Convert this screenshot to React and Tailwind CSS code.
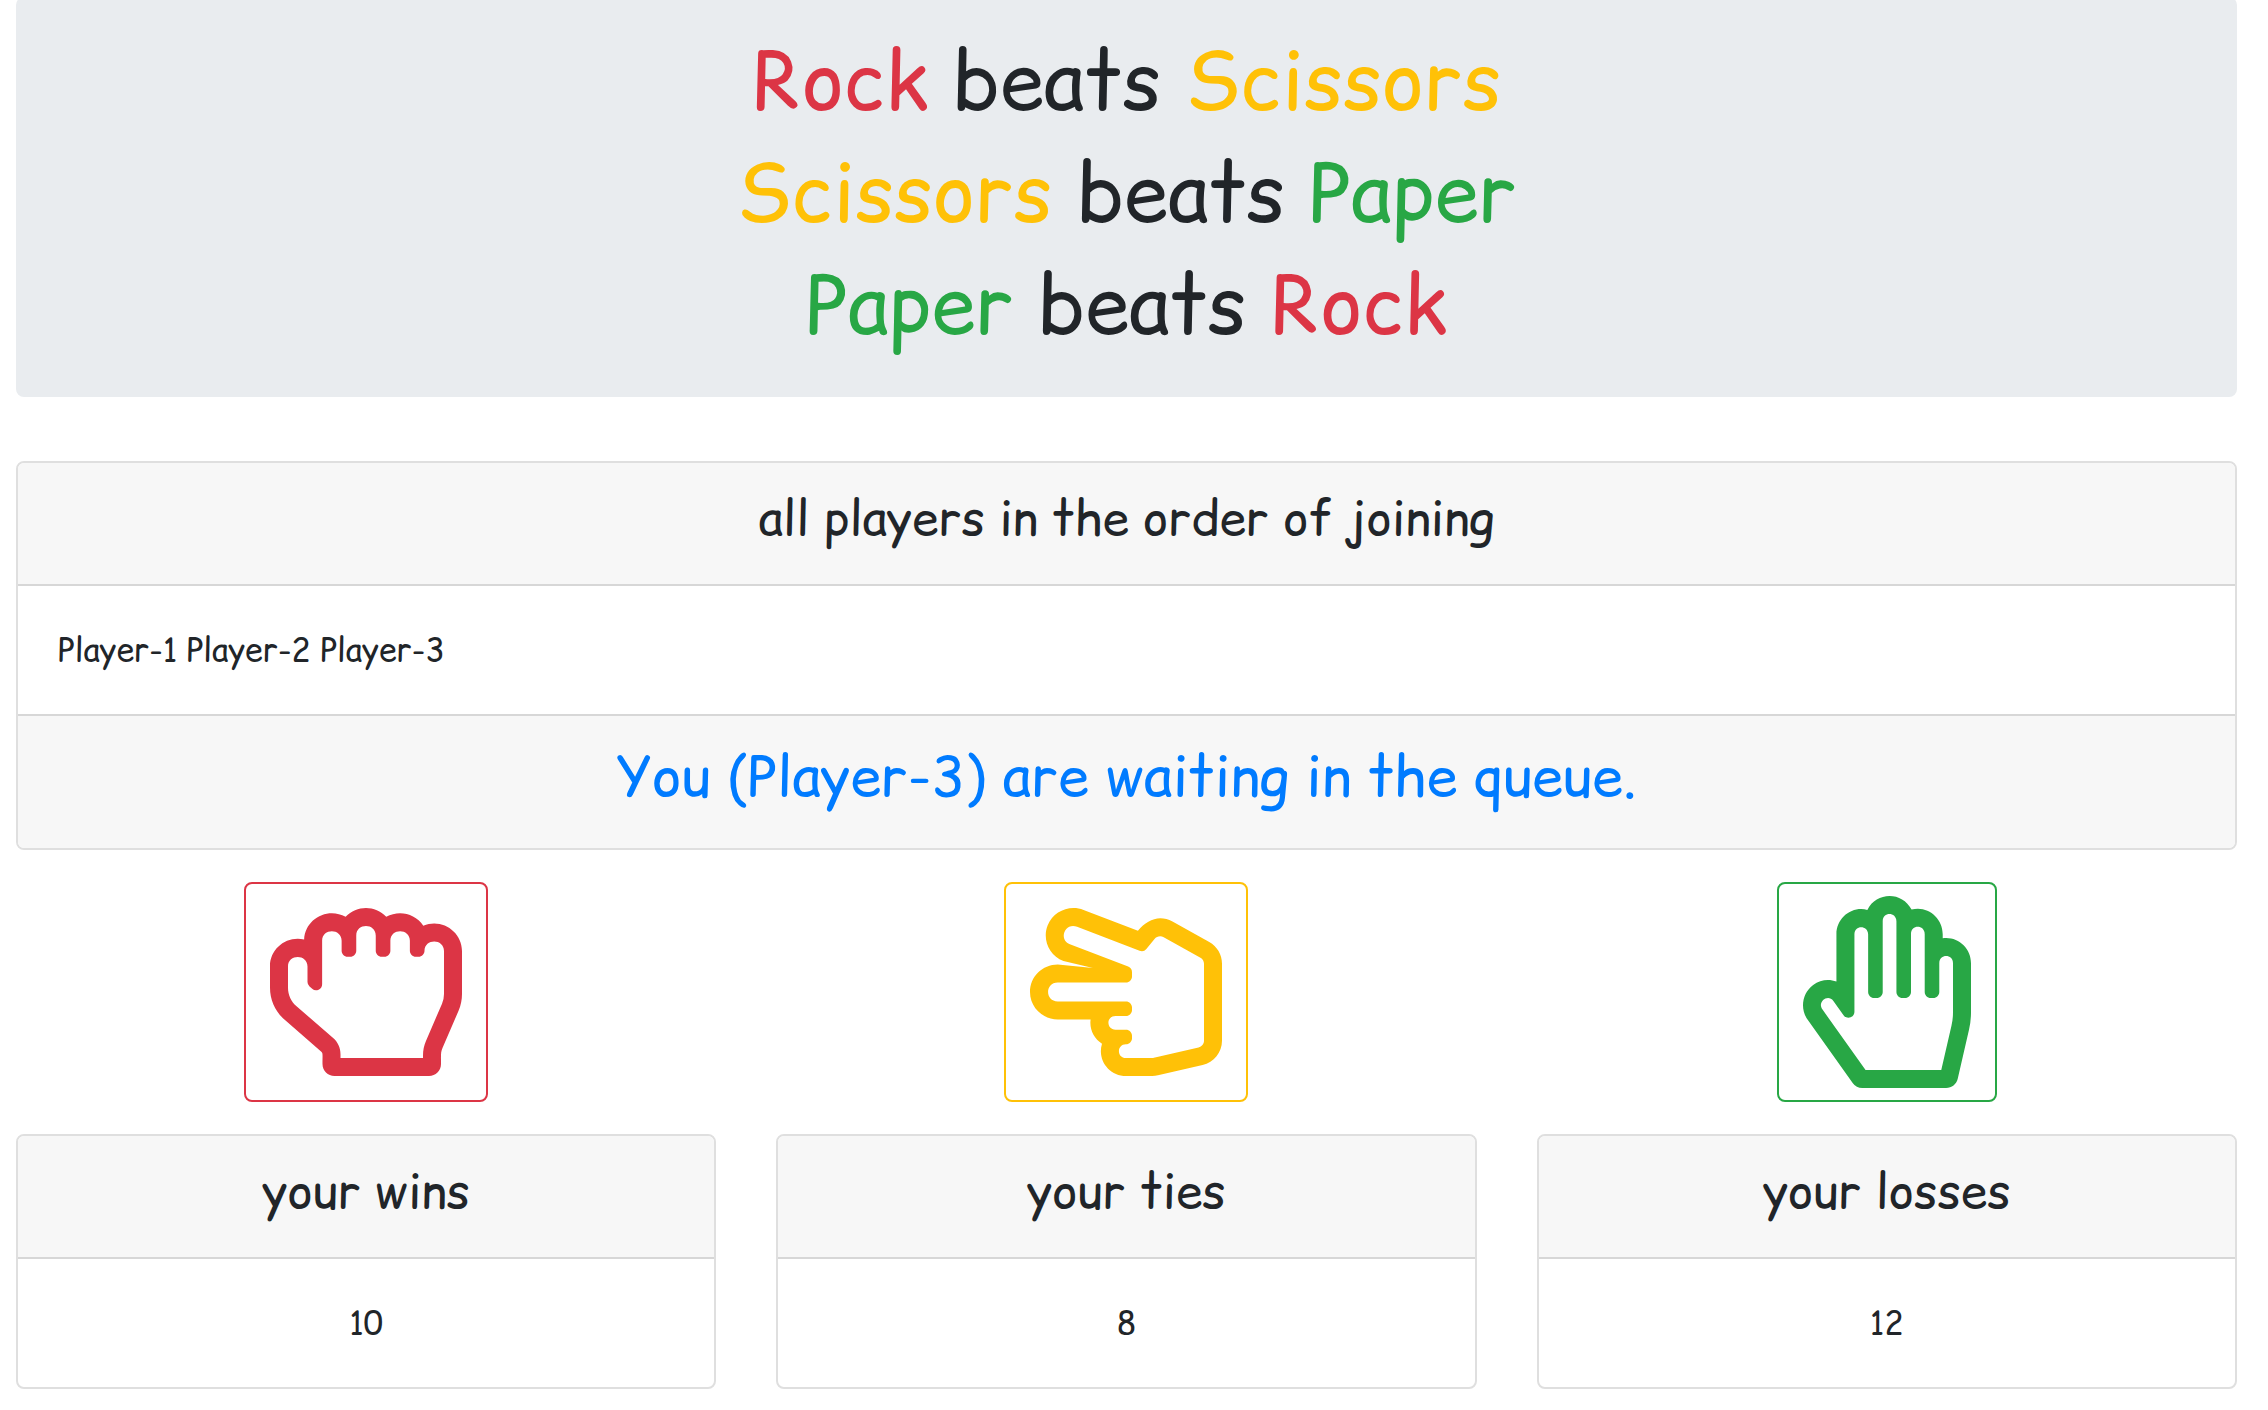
import { FaRegHandRock, FaRegHandScissors, FaRegHandPaper } from "react-icons/fa";

function Rock() { return <span className="text-[#dc3545]">Rock</span>; }
function Scissors() { return <span className="text-[#ffc107]">Scissors</span>; }
function Paper() { return <span className="text-[#28a745]">Paper</span>; }

function CardTitle({ children }) {
  return (
    <h2 className="rounded-t-md border-b-2 border-[#d7d7d7] bg-[#f7f7f7] pt-[26px] pb-[38px] text-center text-5xl leading-[57px]">{children}</h2>
  );
}

function ScoreCard({ title, value }) {
  return (
    <section className="rounded-lg border-2 border-[#dfdfdf]">
      <CardTitle>{title}</CardTitle>
      <p className="py-10 text-center text-[32px] leading-12">{value}</p>
    </section>
  );
}

export default function App() {
  return (
    <main className="pr-[31px] pl-4 font-['Comic_Sans_MS','Comic_Relief','Comic_Neue','Open_Sans',sans-serif] text-[#212529]">
      <header className="-mt-[3px] rounded-lg bg-[#e9ecef] pt-9 pb-7 text-center text-[80px] leading-24">
        <h1 className="mb-4"><Rock /> beats <Scissors /></h1>
        <h1 className="mb-4"><Scissors /> beats <Paper /></h1>
        <h1 className="mb-4"><Paper /> beats <Rock /></h1>
      </header>
      <section className="mt-16 rounded-lg border-2 border-[#dfdfdf]">
        <CardTitle>all players in the order of joining</CardTitle>
        <p className="p-10 text-[32px] leading-12">Player-1 Player-2 Player-3</p>
        <h2 className="rounded-b-md border-t-2 border-[#d7d7d7] bg-[#f7f7f7] pt-[26px] pb-[38px] text-center text-[56px] leading-17 text-[#007bff]">You (Player-3) are waiting in the queue.</h2>
      </section>
      <div className="my-8 grid grid-cols-3 gap-15">
        <div className="flex justify-center">
          <button aria-label="Rock" className="rounded-lg border-2 border-[#dc3545] px-6 py-3 text-[#dc3545]"><FaRegHandRock className="size-48" /></button>
        </div>
        <div className="flex justify-center">
          <button aria-label="Scissors" className="rounded-lg border-2 border-[#ffc107] px-6 py-3 text-[#ffc107]"><FaRegHandScissors className="size-48" /></button>
        </div>
        <div className="flex justify-center">
          <button aria-label="Paper" className="rounded-lg border-2 border-[#28a745] px-6 py-3 text-[#28a745]"><FaRegHandPaper className="h-48 w-42" /></button>
        </div>
      </div>
      <div className="grid grid-cols-3 gap-15">
        <ScoreCard title="your wins" value="10" />
        <ScoreCard title="your ties" value="8" />
        <ScoreCard title="your losses" value="12" />
      </div>
    </main>
  );
}
